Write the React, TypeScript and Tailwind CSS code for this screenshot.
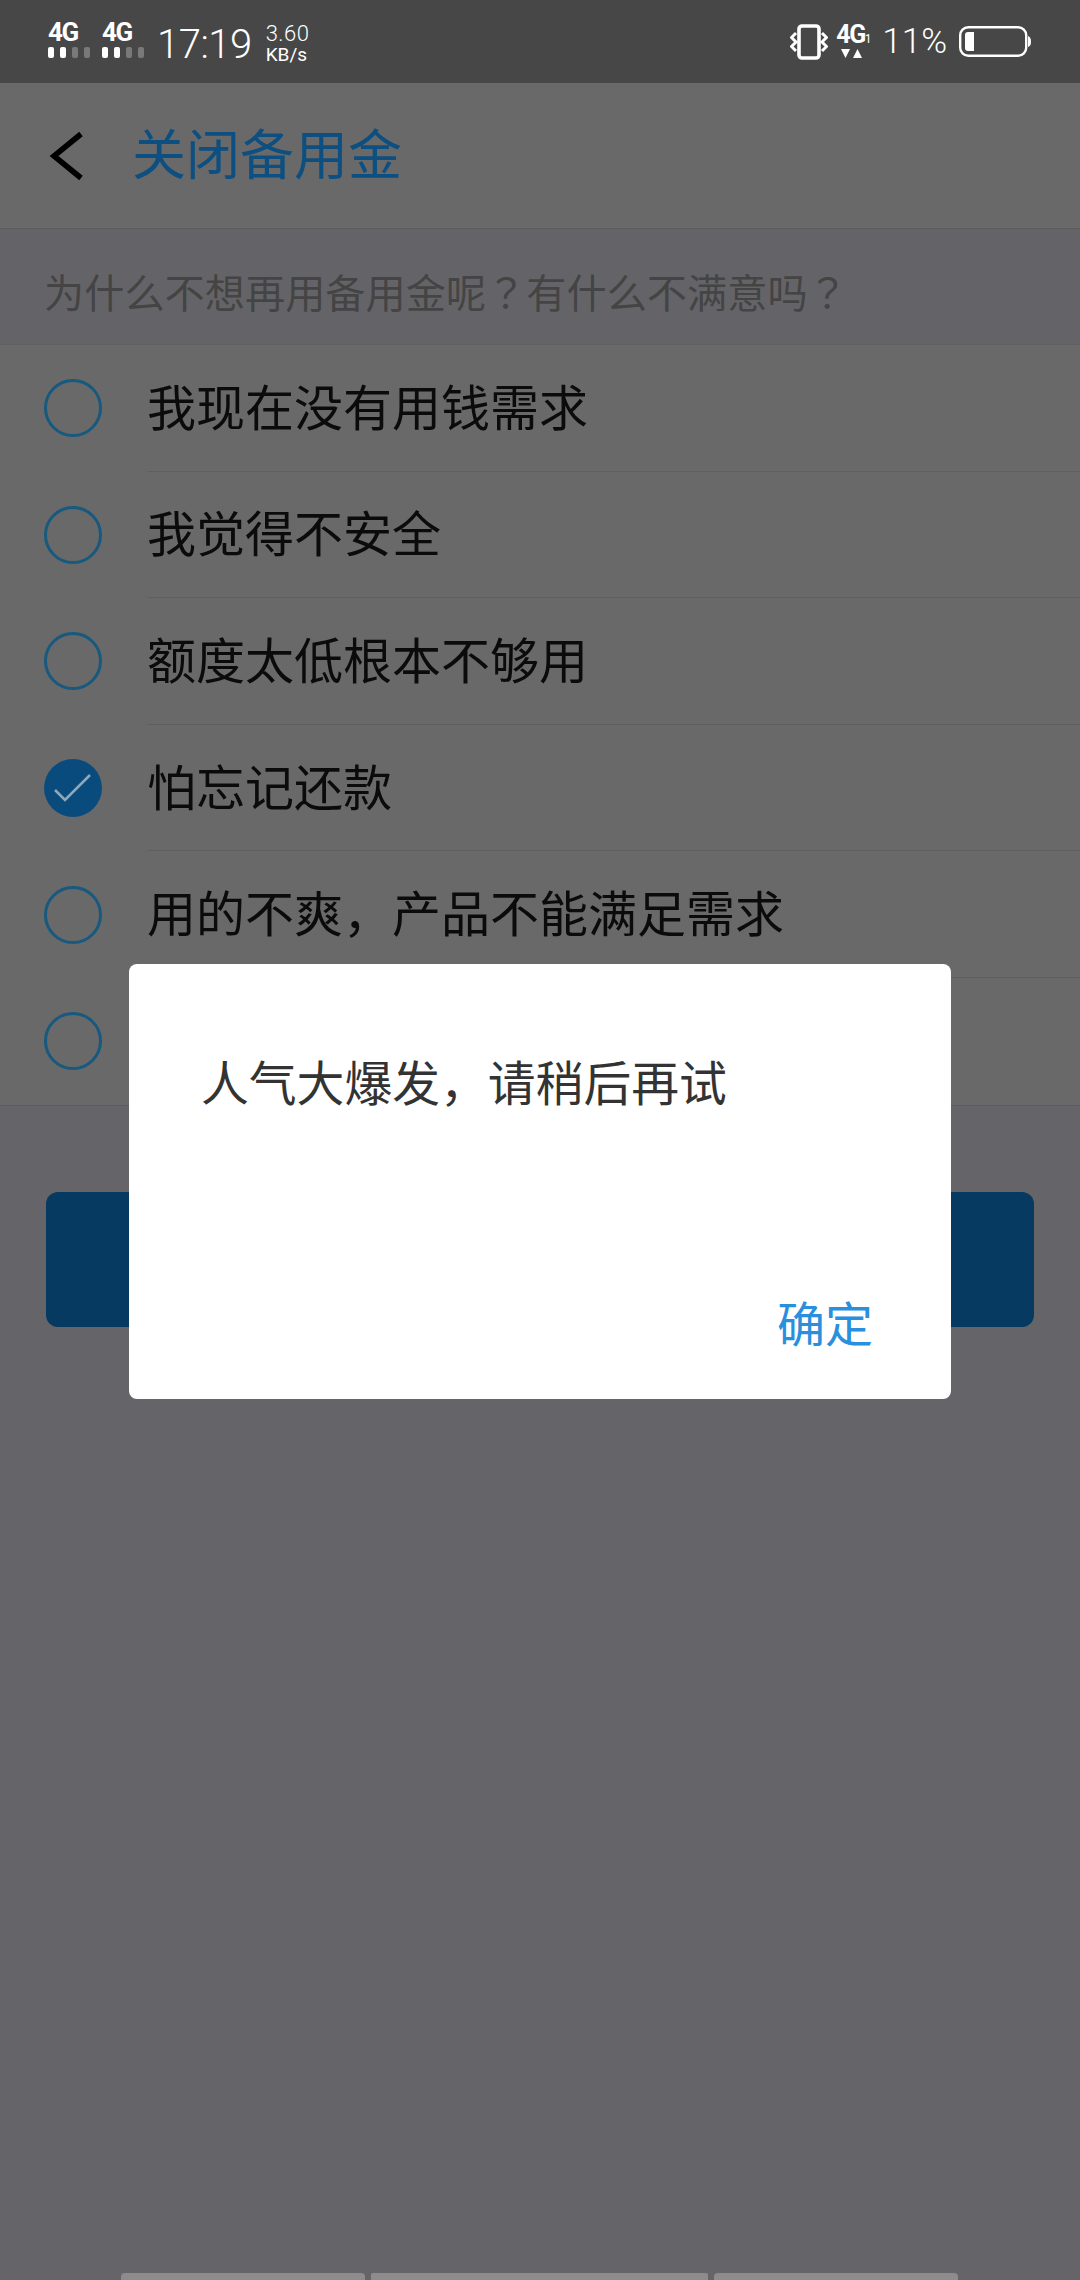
const cjk = "font-['Noto_Sans_CJK_SC','Noto_Sans',sans-serif]";
const mark = "font-['Noto_Sans_CJK_TC',sans-serif]";

const reasons = [
  { label: '我现在没有用钱需求' },
  { label: '我觉得不安全' },
  { label: '额度太低根本不够用' },
  { label: '怕忘记还款', checked: true },
  { label: '用的不爽，产品不能满足需求' },
  { label: '' },
];

function Signal() {
  return (
    <div className="mb-[2px] flex w-[42px] flex-col">
      <span className="h-[18px] font-['Roboto',sans-serif] text-[26px] leading-[18px] font-bold tracking-[-1.5px] text-white">4G</span>
      <div className="mt-[6px] flex items-end gap-[6px]">
        <span className="h-[11px] w-[6px] rounded-[2px] bg-white" />
        <span className="h-[11px] w-[6px] rounded-[2px] bg-white" />
        <span className="h-[11px] w-[6px] rounded-[2px] bg-[#797979]" />
        <span className="h-[11px] w-[6px] rounded-[2px] bg-[#797979]" />
      </div>
    </div>
  );
}

function Vibrate() {
  return (
    <svg width="38" height="36" viewBox="0 0 38 36" fill="none" stroke="white">
      <rect x="9" y="2" width="20" height="32" rx="3" strokeWidth="3.6" />
      <path d="M6 9 L1.5 13.5 L6 18 L1.5 22.5 L6 27" strokeWidth="3" />
      <path d="M32 9 L36.5 13.5 L32 18 L36.5 22.5 L32 27" strokeWidth="3" />
    </svg>
  );
}

function Battery() {
  return (
    <svg width="73" height="32" viewBox="0 0 73 32">
      <rect x="1.2" y="1.2" width="66" height="28.6" rx="8" fill="none" stroke="white" strokeWidth="2.4" />
      <path d="M6 9 Q6 6 9 6 H15 V25 H9 Q6 25 6 22 Z" fill="white" />
      <path d="M69 10 Q72 11 72 15.5 Q72 20 69 21 Z" fill="white" />
    </svg>
  );
}

function StatusBar() {
  return (
    <div className="flex h-[83px] items-center bg-[#474747] pr-[48px] pl-[48px] font-['Roboto',sans-serif] text-white">
      <Signal />
      <div className="ml-[12px]">
        <Signal />
      </div>
      <span className="mt-[7px] ml-[13px] text-[40px] leading-none font-light tracking-[-0.5px]">17:19</span>
      <div className="mt-[3px] ml-[14px] flex flex-col">
        <span className="text-[22px] leading-[22px] font-light tracking-[0.5px]">3.60</span>
        <span className="text-[19px] leading-[19px]">KB/s</span>
      </div>
      <div className="ml-auto flex items-center">
        <Vibrate />
        <div className="ml-[8px] flex w-[33px] flex-col">
          <span className="h-[18px] text-[25px] leading-[18px] font-bold tracking-[-1.5px]">
            4G<span className="text-[12px] font-normal tracking-normal">1</span>
          </span>
          <div className="mt-[5px] ml-[5px] flex gap-[3px]">
            <svg width="9" height="9" viewBox="0 0 9 9"><path d="M0 0 H9 L4.5 9 Z" fill="white" /></svg>
            <svg width="9" height="9" viewBox="0 0 9 9"><path d="M0 9 H9 L4.5 0 Z" fill="white" /></svg>
          </div>
        </div>
        <span className="ml-[13px] text-[35px] leading-none font-light">11%</span>
        <div className="mt-[1px] ml-[12px]">
          <Battery />
        </div>
      </div>
    </div>
  );
}

function Radio({ checked }: { checked?: boolean }) {
  if (checked) {
    return (
      <div className="flex h-[58px] w-[58px] shrink-0 items-center justify-center rounded-full bg-[#0a4b7d]">
        <svg width="38" height="30" viewBox="0 0 38 30" fill="none" stroke="#8fa8ba" strokeWidth="2.6">
          <path d="M1 17 L11 27 L36 2" />
        </svg>
      </div>
    );
  }
  return <div className="h-[58px] w-[58px] shrink-0 rounded-full border-[3px] border-[#17597f]" />;
}

function ReasonRow({ label, checked, last }: { label: string; checked?: boolean; last?: boolean }) {
  return (
    <div className="flex h-[126.6px] items-center pl-[44px]">
      <Radio checked={checked} />
      <div className={`ml-[45px] flex h-full flex-1 items-center ${last ? '' : 'border-b border-[#5f5f5f]'}`}>
        <span className="mb-[7px] text-[49px] leading-none text-[#0b0b0b]">{label}</span>
      </div>
    </div>
  );
}

export default function App() {
  return (
    <div className={`relative flex h-[2280px] w-[1080px] flex-col overflow-hidden bg-[#656569] ${cjk}`}>
      <StatusBar />

      <div className="flex h-[146px] items-center border-b border-[#5c5c5c] bg-[#696969] pl-[48px]">
        <svg width="38" height="50" viewBox="0 0 38 50" fill="none" stroke="black" strokeWidth="5.5">
          <path d="M33 3 L6 25 L33 47" />
        </svg>
        <span className="mb-[7px] ml-[46px] text-[54px] leading-none text-[#0d4f80]">关闭备用金</span>
      </div>

      <div className="flex h-[116px] items-center border-b border-[#5f5f5f] bg-[#646468] pl-[44px]">
        <span className="mt-[10px] text-[40.2px] leading-none text-[#444444]">
          为什么不想再用备用金呢<span className={mark}>？</span>有什么不满意吗<span className={mark}>？</span>
        </span>
      </div>

      <div className="border-b border-[#5c5c5c] bg-[#696969]">
        {reasons.map((r, i) => (
          <ReasonRow key={i} label={r.label} checked={r.checked} last={i === reasons.length - 1} />
        ))}
      </div>

      <div className="mx-[46px] mt-[86px] h-[135px] rounded-[12px] bg-[#073a60]" />

      <div className="mt-auto ml-[121px] flex h-[7px] w-[837px] gap-[6px]">
        <div className="w-[244px] rounded-t-[4px] bg-[#8c8c8c]" />
        <div className="w-[337px] rounded-t-[2px] bg-[#8c8c8c]" />
        <div className="flex-1 rounded-t-[4px] bg-[#8c8c8c]" />
      </div>

      <div className="absolute top-[964px] left-[129px] flex h-[435px] w-[822px] flex-col rounded-[8px] bg-white pt-[92px] pr-[78px] pb-[53px] pl-[72px]">
        <p className="text-[47.8px] leading-[50px] text-[#333333]">人气大爆发，请稍后再试</p>
        <button className="mt-auto self-end text-[48px] leading-[50px] text-[#2a8fdc]">确定</button>
      </div>
    </div>
  );
}
